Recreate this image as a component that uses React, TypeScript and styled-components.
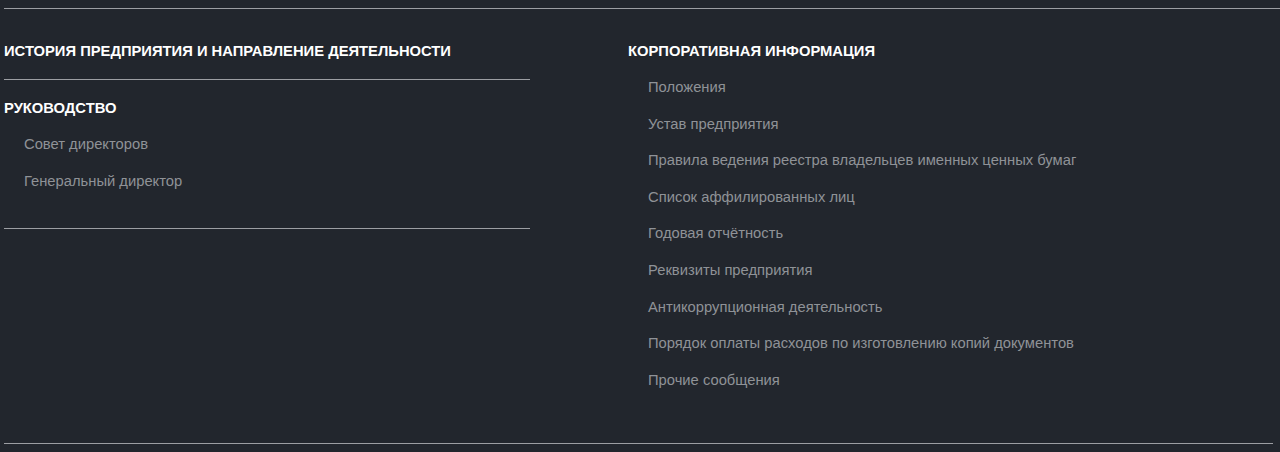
import React from "react";
import styled, { createGlobalStyle } from "styled-components";

const Global = createGlobalStyle`
  html, body { margin: 0; padding: 0; background: #22262d; }
  body { font-family: "Liberation Sans", Arial, sans-serif; }
  * { box-sizing: border-box; }
`;

const Page = styled.div`
  padding: 8px 0 0 4px;
  min-height: 452px;
  background: #22262d;
`;

const Footer = styled.footer`
  border-top: 1px solid #9c9ea3;
  display: grid;
  grid-template-columns: 526px 1fr;
  column-gap: 98px;
  padding-bottom: 45px;
  border-bottom: 1px solid #9c9ea3;
  margin-right: 7px;
  position: relative;
`;

const TopExtend = styled.div`
  position: absolute;
  top: -1px;
  right: -7px;
  width: 7px;
  height: 1px;
  background: #9c9ea3;
`;

const Column = styled.div`
  display: flex;
  flex-direction: column;
`;

const Block = styled.div<{ $rule?: boolean }>`
  border-bottom: ${(p) => (p.$rule ? "1px solid #9c9ea3" : "none")};
`;

const Heading = styled.h3<{ $top: number; $bottom: number }>`
  margin: 0;
  padding: ${(p) => p.$top}px 0 ${(p) => p.$bottom}px;
  font-size: 14.75px;
  line-height: 20px;
  font-weight: 700;
  color: #ffffff;
  text-transform: uppercase;
`;

const List = styled.ul<{ $top: number; $bottom: number }>`
  list-style: none;
  margin: 0;
  padding: ${(p) => p.$top}px 0 ${(p) => p.$bottom}px 20px;
`;

const Item = styled.li`
  font-size: 14.75px;
  line-height: 36.6px;
  color: #8f9297;
`;

const leftItems = ["Совет директоров", "Генеральный директор"];
const rightItems = [
  "Положения",
  "Устав предприятия",
  "Правила ведения реестра владельцев именных ценных бумаг",
  "Список аффилированных лиц",
  "Годовая отчётность",
  "Реквизиты предприятия",
  "Антикоррупционная деятельность",
  "Порядок оплаты расходов по изготовлению копий документов",
  "Прочие сообщения",
];

export default function App() {
  return (
    <>
      <Global />
      <Page>
        <Footer>
          <TopExtend />
          <Column>
            <Block $rule>
              <Heading $top={32} $bottom={18}>
                История предприятия и направление деятельности
              </Heading>
            </Block>
            <Block $rule>
              <Heading $top={18} $bottom={8}>
                Руководство
              </Heading>
              <List $top={0} $bottom={29}>
                {leftItems.map((t) => (
                  <Item key={t}>{t}</Item>
                ))}
              </List>
            </Block>
          </Column>
          <Column>
            <Heading $top={32} $bottom={0}>
              Корпоративная информация
            </Heading>
            <List $top={8} $bottom={0}>
              {rightItems.map((t) => (
                <Item key={t}>{t}</Item>
              ))}
            </List>
          </Column>
        </Footer>
      </Page>
    </>
  );
}
